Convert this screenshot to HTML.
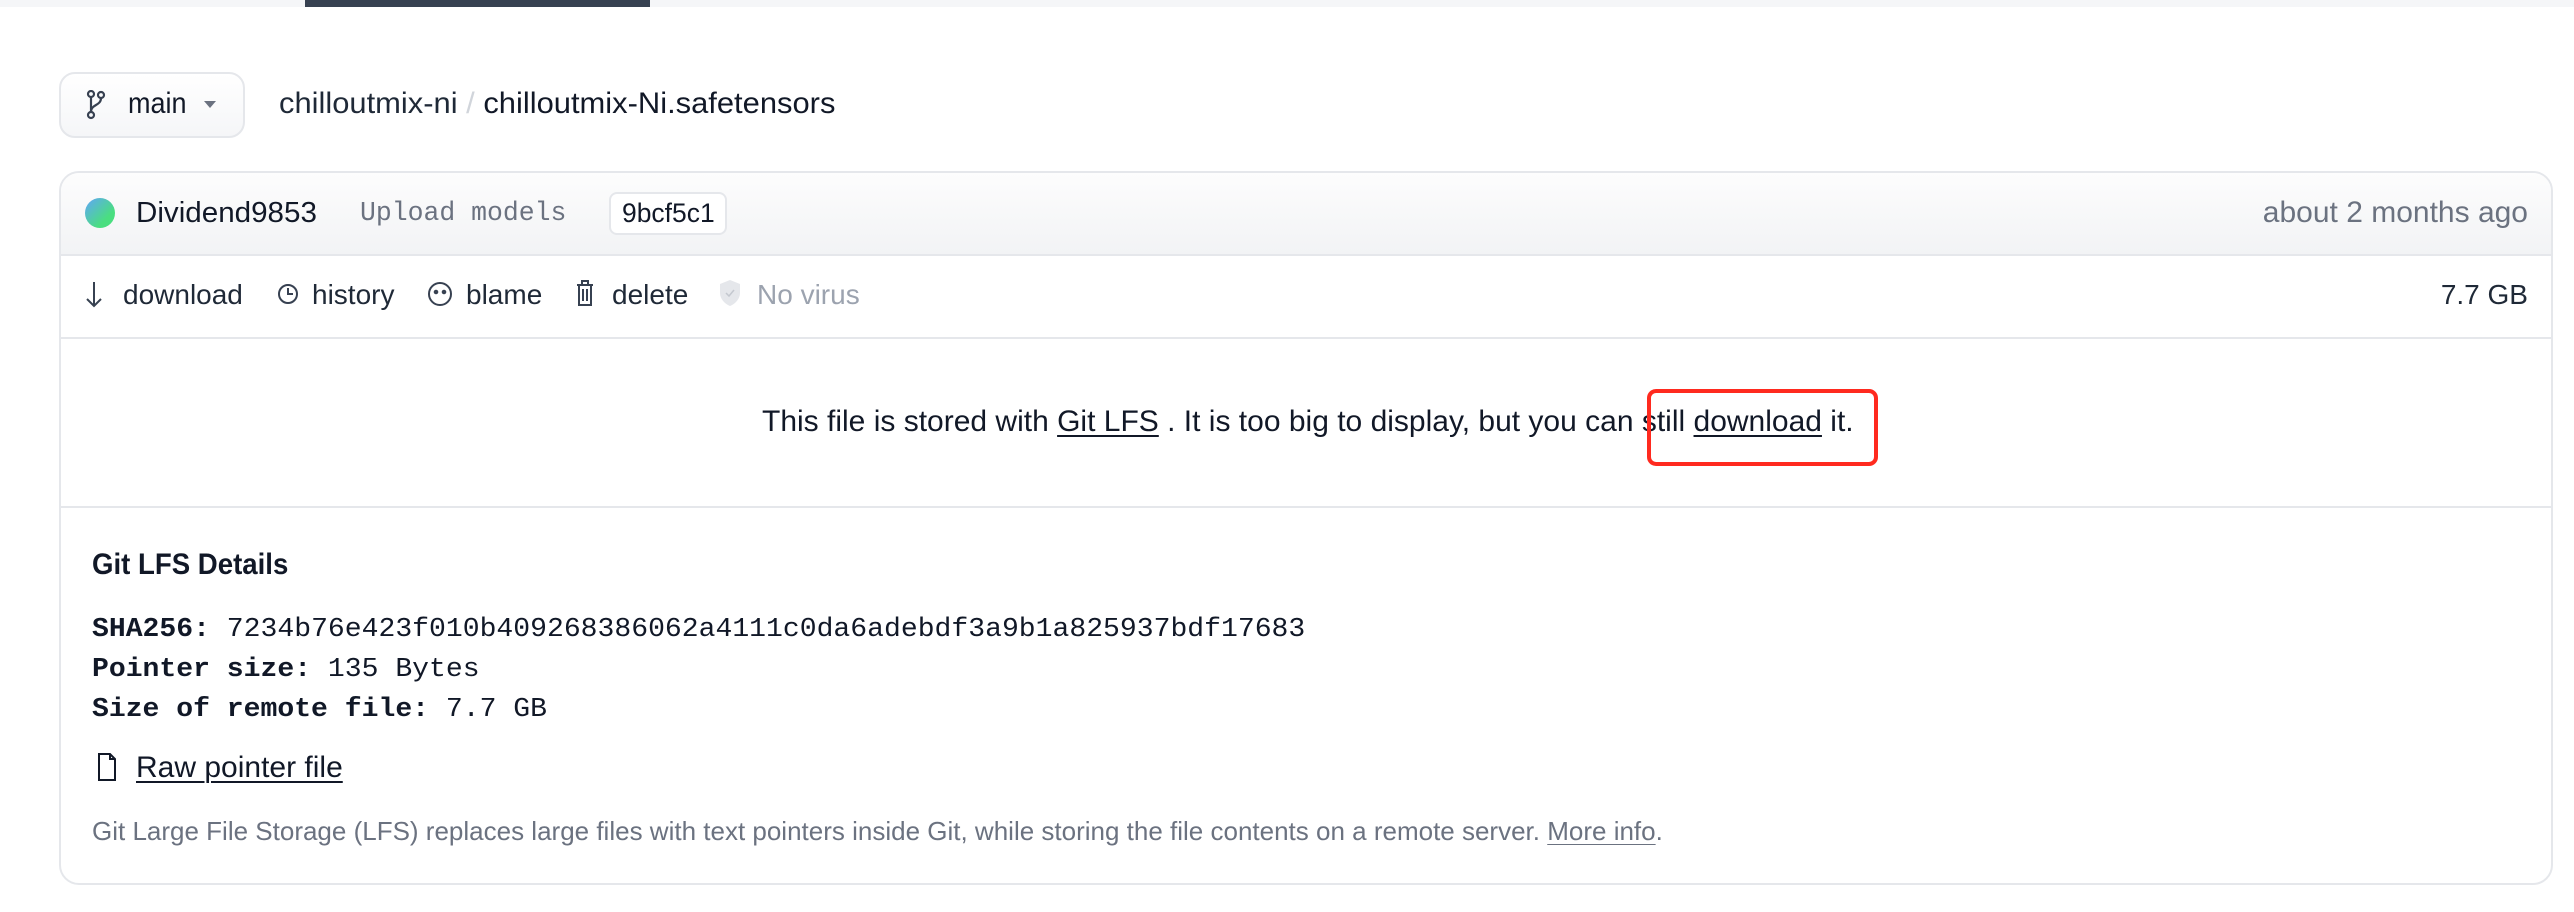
<!DOCTYPE html>
<html><head><meta charset="utf-8"><style>
*{margin:0;padding:0;box-sizing:border-box}
body{width:2574px;height:912px;background:#fff;position:relative;overflow:hidden;font-family:"Liberation Sans",sans-serif;color:#111827}
.a{position:absolute;white-space:nowrap}
.s{display:inline-block;transform-origin:left center}
.m{font-family:"Liberation Mono",monospace}
u{text-decoration:underline;text-underline-offset:4px;text-decoration-thickness:2px}
</style></head><body>
<div class="a" style="left:0;top:0;width:2574px;height:7px;background:#f5f6f8"></div>
<div class="a" style="left:305px;top:0;width:345px;height:7px;background:#374151"></div>

<div class="a" style="left:59px;top:72px;width:186px;height:66px;border:2px solid #e5e7eb;border-radius:16px;background:linear-gradient(#fff,#f5f6f8)"></div>
<svg class="a" style="left:86px;top:90px" width="20" height="30" viewBox="0 0 20 30" fill="none" stroke="#374151" stroke-width="2.2"><circle cx="5" cy="4" r="3"/><circle cx="5" cy="25" r="3"/><circle cx="15" cy="5" r="3"/><path d="M5 7v15M15 8c0 8-10 6-10 14"/></svg>
<div class="a" style="left:128px;top:86px;font-size:30px;line-height:36px"><span class="s" style="transform:scaleX(.9)">main</span></div>
<svg class="a" style="left:204px;top:101px" width="12" height="8"><path d="M0 0h12L6 7z" fill="#6b7280"/></svg>
<div class="a" style="left:279px;top:86px;font-size:30px;line-height:36px;color:#1f2937"><span class="s" style="transform:scaleX(1.03)">chilloutmix-ni <span style="color:#d1d5db">/</span> <span style="color:#111827">chilloutmix-Ni.safetensors</span></span></div>

<div class="a" style="left:59px;top:171px;width:2494px;height:714px;border:2px solid #e5e7eb;border-radius:20px;overflow:hidden">
 <div style="height:83px;background:linear-gradient(#fdfdfd,#f2f3f5);border-bottom:2px solid #e5e7eb"></div>
 <div style="height:83px;border-bottom:2px solid #e5e7eb"></div>
 <div style="height:169px;border-bottom:2px solid #e5e7eb"></div>
</div>
<div class="a" style="left:85px;top:198px;width:30px;height:30px;border-radius:50%;background:linear-gradient(135deg,#60a5fa,#4ade80 70%)"></div>
<div class="a" style="left:136px;top:195px;font-size:29px;line-height:36px"><span class="s" style="transform:scaleX(1.02)">Dividend9853</span></div>
<div class="a m" style="left:360px;top:198px;font-size:27px;line-height:32px;color:#6b7280"><span class="s" style="transform:scaleX(.98)">Upload models</span></div>
<div class="a" style="left:609px;top:192px;width:118px;height:43px;border:2px solid #e5e7eb;border-radius:8px;background:#fff"></div>
<div class="a" style="left:622px;top:196px;font-size:27px;line-height:34px"><span class="s" style="transform:scaleX(.98)">9bcf5c1</span></div>
<div class="a" style="right:46px;top:195px;font-size:30px;line-height:36px;color:#6b7280"><span class="s" style="transform-origin:right center">about 2 months ago</span></div>

<svg class="a" style="left:86px;top:280px" width="16" height="28" fill="none" stroke="#374151" stroke-width="2"><path d="M8 2v24M1 19l7 7 7-7"/></svg>
<div class="a" style="left:123px;top:278px;font-size:28px;line-height:34px;color:#1f2937">download</div>
<svg class="a" style="left:277px;top:282px" width="22" height="24" fill="none" stroke="#374151" stroke-width="2"><circle cx="11" cy="12" r="9"/><path d="M11 6v6h5"/></svg>
<div class="a" style="left:312px;top:278px;font-size:28px;line-height:34px;color:#1f2937">history</div>
<svg class="a" style="left:427px;top:281px" width="26" height="26" fill="none" stroke="#374151" stroke-width="2"><circle cx="13" cy="13" r="11"/><circle cx="9" cy="11" r="1.3" fill="#374151"/><circle cx="17" cy="11" r="1.3" fill="#374151"/></svg>
<div class="a" style="left:466px;top:278px;font-size:28px;line-height:34px;color:#1f2937">blame</div>
<svg class="a" style="left:575px;top:279px" width="20" height="28" fill="none" stroke="#374151" stroke-width="2"><path d="M2 6h16M7 6V2h6v4M4 6v20h12V6M8 10v12M12 10v12"/></svg>
<div class="a" style="left:612px;top:278px;font-size:28px;line-height:34px;color:#1f2937">delete</div>
<svg class="a" style="left:719px;top:279px" width="22" height="28" fill="#e5e7eb"><path d="M11 1l10 4v9c0 6-5 11-10 13C6 25 1 20 1 14V5z"/><path d="M7 14l3 3 5-6" stroke="#c4c8cf" stroke-width="1.5" fill="none"/></svg>
<div class="a" style="left:757px;top:278px;font-size:28px;line-height:34px;color:#9ca3af">No virus</div>
<div class="a" style="right:46px;top:278px;font-size:28px;line-height:34px;color:#1f2937">7.7 GB</div>

<div class="a" style="left:762px;top:404px;font-size:30px;line-height:36px"><span class="s">This file is stored with <u>Git LFS</u> . It is too big to display, but you can still <u>download</u> it.</span></div>
<div class="a" style="left:1647px;top:389px;width:231px;height:77px;border:4px solid #ff2a1f;border-radius:9px"></div>

<div class="a" style="left:92px;top:547px;font-size:30px;line-height:36px;font-weight:bold"><span class="s" style="transform:scaleX(.92)">Git LFS Details</span></div>
<div class="a m" style="left:92px;top:610px;font-size:27px;line-height:40px"><span class="s" style="transform:scaleX(1.04)"><b>SHA256:</b> 7234b76e423f010b409268386062a4111c0da6adebdf3a9b1a825937bdf17683<br><b>Pointer size:</b> 135 Bytes<br><b>Size of remote file:</b> 7.7 GB</span></div>
<svg class="a" style="left:97px;top:753px" width="20" height="28" fill="none" stroke="#111827" stroke-width="2"><path d="M2 1h11l5 5v21H2zM13 1v5h5"/></svg>
<div class="a" style="left:136px;top:750px;font-size:30px;line-height:36px"><u>Raw pointer file</u></div>
<div class="a" style="left:92px;top:815px;font-size:26px;line-height:32px;color:#6b7280"><span class="s">Git Large File Storage (LFS) replaces large files with text pointers inside Git, while storing the file contents on a remote server. <u style="text-decoration-thickness:1px">More info</u>.</span></div>
</body></html>
